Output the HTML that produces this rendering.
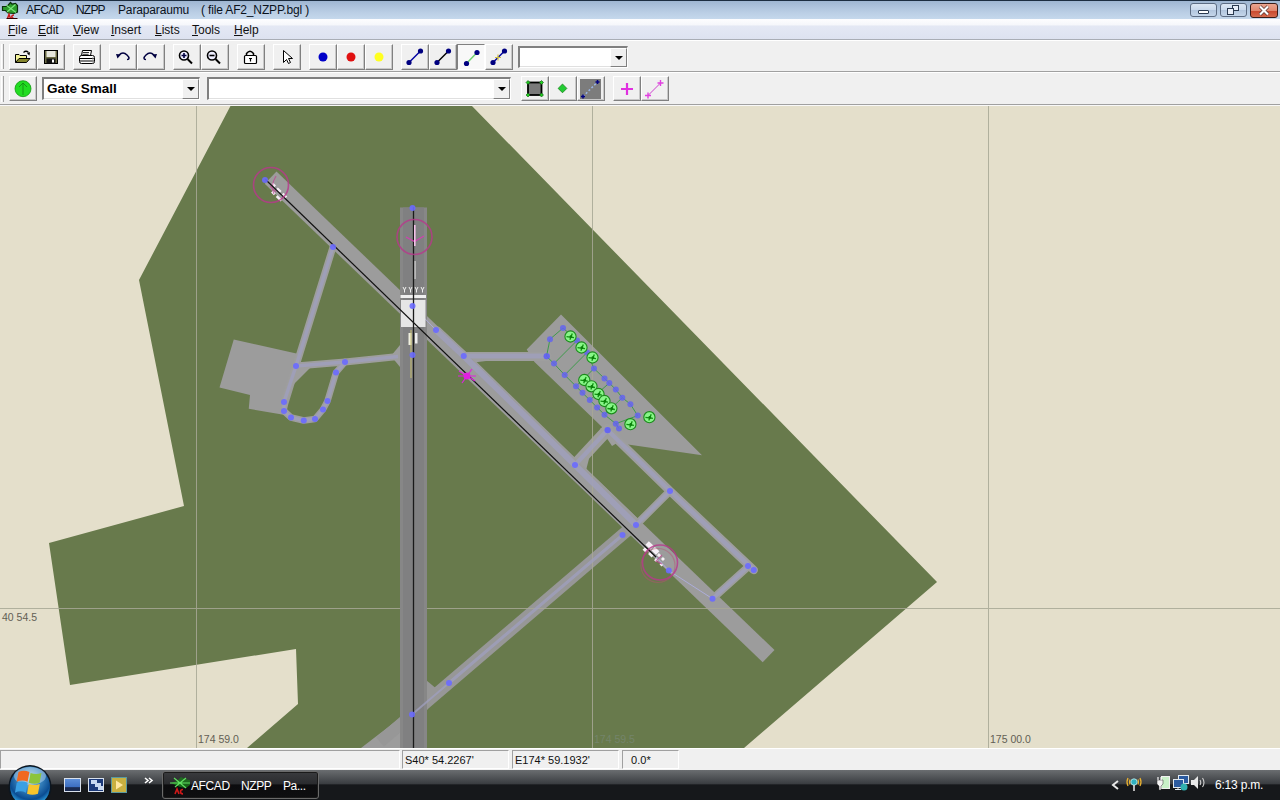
<!DOCTYPE html>
<html><head><meta charset="utf-8">
<style>
*{box-sizing:border-box;margin:0;padding:0}
html,body{width:1280px;height:800px;overflow:hidden;background:#f0f0f0;font-family:"Liberation Sans",sans-serif;}
.abs{position:absolute}
#title{left:0;top:0;width:1280px;height:19px;background:linear-gradient(#9fb6d2,#b9cde4 60%,#c5d8ec);border-top:1px solid #1c2d40}
#title .t{position:absolute;top:2px;font-size:12px;letter-spacing:-0.15px;color:#0a121c;white-space:pre}
#menu{left:0;top:19px;width:1280px;height:21px;background:linear-gradient(#fdfdff 0,#f6f7fb 28%,#e4e8f4 36%,#dde2f0 100%);border-bottom:1px solid #a9adb5}
#menu span{position:absolute;top:4px;font-size:12px;color:#111}
#tb1{left:0;top:40px;width:1280px;height:32px;background:#f0f0f0;border-top:1px solid #fff;border-bottom:1px solid #a0a0a0}
#tb2{left:0;top:72px;width:1280px;height:34px;background:#f0f0f0;border-top:1px solid #fff;border-bottom:1px solid #f8f8f8;box-shadow:inset 0 -1px 0 #a0a0a0}
.btn{position:absolute;width:28px;height:25px;background:#f0f0f0;border-top:1px solid #fff;border-left:1px solid #fff;border-right:1px solid #808080;border-bottom:1px solid #808080;box-shadow:inset -1px -1px 0 #c8c8c8}
.btn.p{border-top:1px solid #808080;border-left:1px solid #808080;border-right:1px solid #fff;border-bottom:1px solid #fff;background:#f8f8f8;box-shadow:none}
#tb1 .btn{height:26px}
.btn svg{position:absolute;left:-1px;top:-1px;width:27px;height:25px}
.grip{position:absolute;width:3px;border-left:1px solid #fff;border-right:1px solid #a0a0a0}
.combo{position:absolute;background:#fff;border-top:2px solid #808080;border-left:2px solid #808080;border-right:1px solid #fff;border-bottom:1px solid #fff;box-shadow:inset -1px -1px 0 #e0e0e0}
.dd{position:absolute;top:0;right:0;width:17px;height:100%;background:#f0f0f0;border-top:1px solid #fff;border-left:1px solid #fff;border-right:1px solid #808080;border-bottom:1px solid #808080}
.dd:after{content:"";position:absolute;left:4px;top:7px;border-left:4px solid transparent;border-right:4px solid transparent;border-top:4px solid #000}
#map{left:0;top:106px;width:1280px;height:642px;background:#e4dfcb;overflow:hidden}
#status{left:0;top:748px;width:1280px;height:22px;background:#f0f0f0;border-top:1px solid #fff}
.pan{position:absolute;top:1px;height:19px;border-top:1px solid #a0a0a0;border-left:1px solid #a0a0a0;border-right:1px solid #fff;border-bottom:1px solid #fff;font-size:11px;color:#111;padding:3px 0 0 2px;white-space:pre}
#task{left:0;top:770px;width:1280px;height:30px;background:linear-gradient(#6a6d70 0,#3b3e42 45%,#16181b 50%,#16181b 100%)}
</style></head><body>

<div id="title" class="abs">
  <svg style="position:absolute;left:0;top:0" width="20" height="19" viewBox="0 0 20 19">
    <path d="M2.5 5.5H7L10.5 1.5 12 3 15.5 2.5 17.5 4.5V11L14 12.5 8 12 5.5 9.5H2.5z" fill="#2c9c2c" stroke="#0c300c" stroke-width="1.2"/>
    <path d="M6 4l10 7.5M15.5 3.5L7 11" stroke="#7ce87c" stroke-width="1.1"/>
    <path d="M7.5 17.5l1.5-4 1.5 4M14 14q-2.2 0-2.2 1.8t2.2 1.8" fill="none" stroke="#c81818" stroke-width="1.5"/>
    <path d="M6.5 17.5h11" stroke="#300" stroke-width="1"/>
  </svg>
  <div class="t" style="left:26px;letter-spacing:-0.6px">AFCAD</div>
  <div class="t" style="left:76px;letter-spacing:-0.8px">NZPP</div>
  <div class="t" style="left:118px">Paraparaumu</div>
  <div class="t" style="left:201px">( file AF2_NZPP.bgl )</div>
  <div style="position:absolute;left:1190px;top:2px;width:27px;height:14px;border:1px solid #5d6d84;border-radius:3px;background:linear-gradient(#dce7f4 0,#c8d8ec 50%,#b2c6de 52%,#c4d6ea 100%)"></div>
  <div style="position:absolute;left:1198px;top:9px;width:11px;height:4px;border:1px solid #2a3a50;background:#fff;border-radius:1px"></div>
  <div style="position:absolute;left:1220px;top:2px;width:27px;height:14px;border:1px solid #5d6d84;border-radius:3px;background:linear-gradient(#dce7f4 0,#c8d8ec 50%,#b2c6de 52%,#c4d6ea 100%)"></div>
  <div style="position:absolute;left:1232px;top:4px;width:7px;height:6px;border:1.5px solid #2a3a50;background:#e8eef8"></div>
  <div style="position:absolute;left:1227px;top:7px;width:7px;height:7px;border:1.5px solid #2a3a50;background:#e8eef8"></div>
  <div style="position:absolute;left:1250px;top:2px;width:28px;height:15px;border:1px solid #3a1c18;border-radius:3px;background:linear-gradient(#eaa590 0,#e08870 50%,#c8482e 52%,#d66a4e 100%)"></div>
  <svg style="position:absolute;left:1257px;top:4px" width="14" height="11" viewBox="0 0 14 11"><path d="M3 1.5l8 8M11 1.5l-8 8" stroke="#4a2a2a" stroke-width="3.4"/><path d="M3 1.5l8 8M11 1.5l-8 8" stroke="#fff" stroke-width="2.2"/></svg>
</div>
<div id="menu" class="abs">
  <span style="left:8px"><u>F</u>ile</span>
  <span style="left:38px"><u>E</u>dit</span>
  <span style="left:73px"><u>V</u>iew</span>
  <span style="left:111px"><u>I</u>nsert</span>
  <span style="left:155px"><u>L</u>ists</span>
  <span style="left:192px"><u>T</u>ools</span>
  <span style="left:234px"><u>H</u>elp</span>
</div>
<div id="tb1" class="abs">
  <div class="grip" style="left:1px;top:3px;height:25px"></div>
  <div class="btn" style="left:9px;top:3px"><svg viewBox="0 0 27 25"><path d="M6.5 18.5V10.5H10l1 1h6.5v3" fill="#f2f29a" stroke="#000"/><path d="M6.5 18.5l3.5-4h11l-3.5 4z" fill="#84842c" stroke="#000"/><path d="M14.5 8.5q2.5-2.5 5 0" fill="none" stroke="#000" stroke-width="1.2"/><path d="M18 9.5l3-1.5-.5 3.5z" fill="#000"/></svg></div><div class="btn" style="left:37px;top:3px"><svg viewBox="0 0 27 25"><rect x="7.5" y="6.5" width="13" height="13" fill="#6a6a44" stroke="#000"/><rect x="9.5" y="7" width="9" height="6" fill="#e6e6dc"/><rect x="9.5" y="14.5" width="9" height="5" fill="#111"/><rect x="15" y="15.5" width="2" height="3" fill="#fff"/></svg></div><div class="btn" style="left:73px;top:3px"><svg viewBox="0 0 27 25"><path d="M9.5 6.5h9l-1 5h-9z" fill="#fff" stroke="#000"/><path d="M10 8.5h6M9.6 10.3h6" stroke="#000" stroke-width=".8"/><rect x="6.5" y="11.5" width="15" height="8" rx="2" fill="#fff" stroke="#000"/><path d="M7 14.5h14M7 17h14" stroke="#000" stroke-width="1.2"/><path d="M20 13v6" stroke="#999" stroke-width="1"/></svg></div><div class="btn" style="left:109px;top:3px"><svg viewBox="0 0 27 25"><path d="M10 11q4-4 8 0t0 4.5" fill="none" stroke="#000040" stroke-width="1.5"/><path d="M7 10l5 .5-3.5 4z" fill="#000040"/></svg></div><div class="btn" style="left:137px;top:3px"><svg viewBox="0 0 27 25"><path d="M17 11q-4-4-8 0t0 4.5" fill="none" stroke="#000040" stroke-width="1.5"/><path d="M20 10l-5 .5 3.5 4z" fill="#000040"/></svg></div><div class="btn" style="left:173px;top:3px"><svg viewBox="0 0 27 25"><circle cx="11" cy="11.5" r="4.5" fill="#eef" stroke="#000" stroke-width="1.6"/><path d="M8.5 11.5h5M11 9v5" stroke="#000040" stroke-width="1.6"/><path d="M14.5 15l4.5 4.5" stroke="#000" stroke-width="2"/></svg></div><div class="btn" style="left:201px;top:3px"><svg viewBox="0 0 27 25"><circle cx="11" cy="11.5" r="4.5" fill="#eef" stroke="#000" stroke-width="1.6"/><path d="M8.5 11.5h5" stroke="#000" stroke-width="1.6"/><path d="M14.5 15l4.5 4.5" stroke="#000" stroke-width="2"/></svg></div><div class="btn" style="left:237px;top:3px"><svg viewBox="0 0 27 25"><path d="M9.5 12V9.5q3.5-4.5 7 0V12" fill="none" stroke="#000" stroke-width="1.5"/><rect x="7.5" y="11.5" width="12" height="8" rx="1" fill="#fff" stroke="#000" stroke-width="1.2"/><path d="M12 14.5h3M13.5 14.5v3" stroke="#000" stroke-width="1.2"/></svg></div><div class="btn" style="left:273px;top:3px"><svg viewBox="0 0 27 25"><path d="M10.5 6.5v12l3-3 2 4 2-1-2-4h4z" fill="#fff" stroke="#000" stroke-width="1"/></svg></div><div class="btn" style="left:309px;top:3px"><svg viewBox="0 0 27 25"><circle cx="14" cy="13" r="4.5" fill="#0000c8"/></svg></div><div class="btn" style="left:337px;top:3px"><svg viewBox="0 0 27 25"><circle cx="14" cy="13" r="4.5" fill="#e01010"/></svg></div><div class="btn" style="left:365px;top:3px"><svg viewBox="0 0 27 25"><circle cx="14" cy="13" r="4.5" fill="#ffff20"/></svg></div><div class="btn" style="left:401px;top:3px"><svg viewBox="0 0 27 25"><path d="M8 18.5L19.5 7" stroke="#0000a0" stroke-width="1.5"/><circle cx="8" cy="18.5" r="2.6" fill="#000080"/><circle cx="19.5" cy="7" r="2.6" fill="#000080"/></svg></div><div class="btn" style="left:429px;top:3px"><svg viewBox="0 0 27 25"><path d="M8 18.5L19.5 7" stroke="#000" stroke-width="1.5"/><circle cx="8" cy="18.5" r="2.6" fill="#000080"/><circle cx="19.5" cy="7" r="2.6" fill="#000080"/></svg></div><div class="btn p" style="left:457px;top:3px"><svg viewBox="0 0 27 25"><path d="M9.5 19.5L20 8.5" stroke="#70d070" stroke-width="1.5"/><circle cx="9.5" cy="19.5" r="2.6" fill="#000080"/><circle cx="20" cy="8.5" r="2.6" fill="#000080"/></svg></div><div class="btn" style="left:485px;top:3px"><svg viewBox="0 0 27 25"><path d="M8 18.5L19.5 7" stroke="#0000a0" stroke-width="1.5"/><circle cx="8" cy="18.5" r="2.6" fill="#000080"/><circle cx="19.5" cy="7" r="2.6" fill="#000080"/><path d="M10 13.5h6M13 10.5v6" stroke="#d0c040" stroke-width="1.2"/></svg></div>
  <div class="combo" style="left:518px;top:5px;width:110px;height:22px"><div class="dd"></div></div>
</div>
<div id="tb2" class="abs">
  <div class="grip" style="left:1px;top:3px;height:26px"></div>
  <div class="btn" style="left:9px;top:3px"><svg viewBox="0 0 27 25"><circle cx="14" cy="12.7" r="8" fill="#22dd22" stroke="#119911" stroke-width=".8"/><path d="M14 19V7M10 11l4-4 4 4" fill="none" stroke="#118811" stroke-width=".8"/></svg></div>
  <div class="combo" style="left:42px;top:4px;width:158px;height:23px"><div class="dd"></div><span style="position:absolute;left:3px;top:2px;font-size:13.5px;font-weight:bold;color:#000">Gate Small</span></div>
  <div class="combo" style="left:207px;top:4px;width:304px;height:23px"><div class="dd"></div></div>
  <div class="btn" style="left:521px;top:3px"><svg viewBox="0 0 27 25"><rect x="7" y="6.5" width="13.5" height="12.5" fill="#7a7a7a" stroke="#000" stroke-width="1.8"/><g fill="#22cc22" stroke="#115511" stroke-width=".6"><path d="M7 4.5l2 2-2 2-2-2z"/><path d="M20.5 4.5l2 2-2 2-2-2z"/><path d="M7 17l2 2-2 2-2-2z"/><path d="M20.5 17l2 2-2 2-2-2z"/></g></svg></div>
  <div class="btn" style="left:549px;top:3px"><svg viewBox="0 0 27 25"><path d="M13.5 8l4.4 4.4-4.4 4.4-4.4-4.4z" fill="#22cc33" stroke="#117711" stroke-width=".7"/></svg></div>
  <div class="btn" style="left:577px;top:3px"><svg viewBox="0 0 27 25"><rect x="3" y="3" width="21" height="20" fill="#7c7c7c"/><path d="M6 20.5L20.5 6" stroke="#9ab8e8" stroke-width="1.5" stroke-dasharray="2 2"/><path d="M4 20.5h4M6 18.5v4M18.5 6h4M20.5 4v4" stroke="#000080" stroke-width="1.5"/></svg></div>
  <div class="btn" style="left:613px;top:3px"><svg viewBox="0 0 27 25"><path d="M8 13h12M14 7v12" stroke="#e030e0" stroke-width="2.2"/></svg></div>
  <div class="btn" style="left:641px;top:3px"><svg viewBox="0 0 27 25"><path d="M7 19.5L19.5 7" stroke="#d040d0" stroke-width="1"/><path d="M4 19.5h6M7 16.5v6M16.5 7h6M19.5 4v6" stroke="#e040e0" stroke-width="1.4"/></svg></div>
</div>

<div id="map" class="abs">
<svg width="1280" height="642" viewBox="0 106 1280 642" style="position:absolute;left:0;top:0">
  <polygon fill="#687a4c" points="231,105 471,105 937,582 744,748 247,748 298,704 296,649 70,685 49,543 184,506 139,280"/>
  <!-- aprons -->
  <polygon fill="#9c9c9c" points="233.75,339.5 297.5,353.75 300,366 285,415 248.75,408.75 250,395 219.5,387.5"/>
  <polygon fill="#9c9c9c" points="561,314.6 702,455.3 624.6,444 612,437 601,426 534.5,362 526.7,349.5"/>
  <!-- bottom-left pavement -->
  <polygon fill="#9c9c9c" points="400,718 400,748 361,748"/>
  <!-- taxiways -->
  <g fill="none" stroke="#9e9e9e" stroke-linejoin="round" stroke-linecap="round">
    <polyline stroke-width="7" points="333,247 296,366"/>
    <polyline stroke-width="7" points="296,366 345,362 412.5,355"/>
    <polyline stroke-width="6.5" points="296,366 284,402 284,411 291,417.5 303.75,420.5 315,419 323,409.5 327.5,401 336,372.5 345,362"/>
    <polyline stroke-width="9" points="463.6,356.5 547,356.5"/>
    <polyline stroke-width="12" points="436,332 463.75,358 575,466 636,525"/>
    <polyline stroke-width="12" points="575,465 607.5,430"/>
    <polyline stroke-width="8.5" points="607.5,430 670,491 753.75,570"/>
    <polyline stroke-width="7.5" points="749,566 712.5,598.75"/>
    <polyline stroke-width="7.5" points="636,525 670,491"/>
  </g>
  <polygon fill="#9e9e9e" points="461,350 486,361 470,363"/>
  <polygon fill="#9e9e9e" points="296,364 312,366 290,388"/>
  <polygon fill="#9e9e9e" points="566,462 590,455 584,478"/>
  <polygon fill="#9e9e9e" points="600,428 622,440 612,446"/>
  <polyline fill="none" stroke="#979797" stroke-width="12" points="628,530 412,714.6 380,742"/>
  <polygon fill="#979797" points="426,680 438,690 426,712"/>
  <polygon fill="#9e9e9e" points="400,345 391,356 400,367"/>
  <!-- diagonal runway -->
  <polygon fill="#9c9c9c" points="276.5,171.5 774.5,650 762.7,662.3 264.7,183.8"/>
  <!-- grid -->
  <g stroke="#a8a896" stroke-width="1" opacity="0.85">
    <line x1="196.5" y1="105" x2="196.5" y2="748"/>
    <line x1="592.5" y1="105" x2="592.5" y2="748"/>
    <line x1="988.5" y1="105" x2="988.5" y2="748"/>
    <line x1="0" y1="608.5" x2="1280" y2="608.5"/>
  </g>
  <!-- vertical runway -->
  <rect x="400" y="207.5" width="27" height="545" fill="#878787"/>
  <rect x="403" y="207.5" width="21" height="545" fill="#808081"/>
  <!-- taxi link lines -->
  <g fill="none" stroke="#a0a0c0" stroke-width="3.5" opacity="0.75" stroke-linejoin="round">
    <polyline points="333,247 296,366 345,362 398,356.5"/>
    <polyline points="296,366 284,402 284,411 291,417.5 303.75,420.5 315,419 323,409.5 327.5,401 336,372.5 345,362"/>
    <polyline stroke-width="5" points="463.6,356 547,356"/>
    <polyline stroke-width="6" points="436,330 463.75,356 575,465 636,525"/>
    <polyline stroke-width="4.5" points="575,465 607.5,430 670,491 753.75,570"/>
    <polyline stroke-width="4" points="749,566 712.5,598.75"/>
    <polyline stroke-width="4" points="636,525 670,491"/>
    <polyline stroke-width="3" points="622.5,535 449,683"/>
    <polyline stroke-width="2" points="449,683 412,714.6"/>
  </g>
  <g fill="none" stroke="#b0b0e8" stroke-width="1" opacity="0.8">
    <polyline points="412.5,306 436,330"/>
    <polyline points="656,557 668.8,570.6 712.5,598.75"/>
  </g>
  <!-- threshold markings vertical runway -->
  <rect x="401" y="300" width="24.5" height="27" fill="#e6e6e6"/>
  <rect x="400.5" y="295" width="25.5" height="3" fill="#f0f0f0"/>
  <g stroke="#f0f0f0" stroke-width="1" fill="none">
    <path d="M403 287l1.5 3 1.5-3M404.5 290v2.5M409 287l1.5 3 1.5-3M410.5 290v2.5M415 287l1.5 3 1.5-3M416.5 290v2.5M421 287l1.5 3 1.5-3M422.5 290v2.5"/>
    <path d="M415 261v18"/>
  </g>
  <rect x="408.5" y="333" width="3" height="12" fill="#f0f0e0"/>
  <rect x="415" y="333" width="2.5" height="10.5" fill="#f0f0f0"/>
  <path d="M411 330v48" stroke="#c8c070" stroke-width="1"/>
  <g fill="#f6f0f6">
    <g transform="translate(651 551) rotate(44) scale(1.4)"><rect x="-6" y="-4" width="5" height="3.5"/><rect x="0" y="-4" width="4.5" height="3.5"/><rect x="-5" y="1" width="3" height="2.5"/><rect x="0" y="1" width="3.5" height="2"/></g>
    <g transform="translate(661 561) rotate(44) scale(1.4)"><rect x="-5" y="-3" width="2.5" height="2"/><rect x="-1" y="-3" width="2" height="2"/><rect x="-4" y="1" width="2" height="2"/><rect x="1" y="1" width="2" height="1.5"/></g>
    <g transform="translate(277 192) rotate(44) scale(1.3)"><rect x="-7" y="-3" width="3" height="2"/><rect x="-2" y="-3" width="4" height="2.5"/><rect x="4" y="-3" width="4" height="2.5"/><rect x="-3" y="1.5" width="3" height="2"/><rect x="2" y="1.5" width="5" height="2"/></g>
  </g>
  <g fill="none" stroke="#c04090" stroke-width="1.1" opacity="0.7">
    <path d="M276 176q-6 10-2 18M270 186l6 6"/>
    <path d="M662 555l-6 6 6 3"/>
  </g>
  <circle cx="658" cy="565.5" r="17" fill="none" stroke="#b85070" stroke-width="1.2" opacity="0.45"/>
  <!-- runway center link lines -->
  <line x1="265" y1="179" x2="656" y2="557" stroke="#111" stroke-width="1.2"/>
  <line x1="413.5" y1="207" x2="413.5" y2="748" stroke="#1a1a1a" stroke-width="1.3"/>
  <!-- nodes -->
  <g fill="#6b6bff" opacity="0.9">
    <circle cx="265" cy="180" r="3"/><circle cx="333" cy="247" r="3"/><circle cx="296" cy="366" r="3"/><circle cx="345" cy="362" r="3"/>
    <circle cx="336" cy="372.5" r="3"/><circle cx="327.5" cy="401" r="3"/><circle cx="323" cy="409.5" r="3"/><circle cx="315" cy="419" r="3"/>
    <circle cx="303.75" cy="420.5" r="3"/><circle cx="291" cy="417.5" r="3"/><circle cx="284" cy="411" r="3"/><circle cx="284" cy="402" r="3"/>
    <circle cx="412.5" cy="208" r="3"/><circle cx="412.5" cy="306" r="3"/><circle cx="412.5" cy="355" r="3"/><circle cx="436" cy="330" r="3"/>
    <circle cx="463.75" cy="356" r="3"/><circle cx="547" cy="356.3" r="3"/><circle cx="575" cy="465" r="3"/><circle cx="607.5" cy="430" r="3"/>
    <circle cx="670" cy="491" r="3"/><circle cx="636" cy="525" r="3"/><circle cx="622.5" cy="535" r="3"/><circle cx="668.8" cy="570.6" r="3"/>
    <circle cx="753.75" cy="570" r="3"/><circle cx="748" cy="566" r="3"/><circle cx="712.5" cy="598.75" r="3"/><circle cx="449" cy="683" r="3"/><circle cx="412" cy="714.6" r="3"/>
  </g>
  <!-- parking -->
  <g fill="none" stroke="#2a9a3a" stroke-width="0.9" opacity="0.9">
    <polyline points="563,328 577,340.5 587,352.5 594,368.5 604.5,378.5 609.3,383 615.8,389.6 622.3,397.7 630.4,404.2 637.7,415.6"/>
    <polyline points="563,328 550,339.2 546.5,356.3 554,363.6 564.7,375 576,386.3 582.5,392.8 589.8,400.1 597.1,407.4 604.5,414.7 615.8,423.7 619,428.6"/>
    <line x1="554" y1="363.6" x2="577" y2="340.5"/>
    <line x1="564.7" y1="375" x2="587" y2="352.5"/>
    <line x1="576" y1="386.3" x2="594" y2="368.5"/>
    <line x1="589.8" y1="400.1" x2="609.3" y2="383"/>
    <line x1="604.5" y1="414.7" x2="622.3" y2="397.7"/>
    <line x1="615.8" y1="423.7" x2="637.7" y2="415.6"/>
  </g>
  <g fill="#6464f0" opacity="0.85">
    <circle cx="563" cy="328" r="3"/><circle cx="577" cy="340.5" r="3"/><circle cx="587" cy="352.5" r="3"/><circle cx="594" cy="368.5" r="3"/><circle cx="604.5" cy="378.5" r="3"/><circle cx="609.3" cy="383" r="3"/><circle cx="615.8" cy="389.6" r="3"/><circle cx="622.3" cy="397.7" r="3"/><circle cx="630.4" cy="404.2" r="3"/><circle cx="637.7" cy="415.6" r="3"/><circle cx="550" cy="339.2" r="3"/><circle cx="546.5" cy="356.3" r="3"/><circle cx="554" cy="363.6" r="3"/><circle cx="564.7" cy="375" r="3"/><circle cx="576" cy="386.3" r="3"/><circle cx="582.5" cy="392.8" r="3"/><circle cx="589.8" cy="400.1" r="3"/><circle cx="597.1" cy="407.4" r="3"/><circle cx="604.5" cy="414.7" r="3"/><circle cx="615.8" cy="423.7" r="3"/><circle cx="619" cy="428.6" r="3"/><circle cx="607.7" cy="430.2" r="3"/>
  </g>
  <g>
    <circle cx="570.5" cy="336.5" r="5.6" fill="#88f688" stroke="#1c8a1c" stroke-width="1.1"/><path d="M566.5,336.7L574.0,337.7M572.3,333.5L569.9,339.7" stroke="#109010" stroke-width="1.3"/><circle cx="570.9" cy="336.7" r="1.4" fill="#0a800a"/>
    <circle cx="581.5" cy="347.5" r="5.6" fill="#88f688" stroke="#1c8a1c" stroke-width="1.1"/><path d="M577.5,347.7L585.0,348.7M583.3,344.5L580.9,350.7" stroke="#109010" stroke-width="1.3"/><circle cx="581.9" cy="347.7" r="1.4" fill="#0a800a"/>
    <circle cx="592.5" cy="357.5" r="5.6" fill="#88f688" stroke="#1c8a1c" stroke-width="1.1"/><path d="M588.5,357.7L596.0,358.7M594.3,354.5L591.9,360.7" stroke="#109010" stroke-width="1.3"/><circle cx="592.9" cy="357.7" r="1.4" fill="#0a800a"/>
    <circle cx="584.3" cy="380" r="5.6" fill="#88f688" stroke="#1c8a1c" stroke-width="1.1"/><path d="M580.3,380.2L587.8,381.2M586.1,377.0L583.7,383.2" stroke="#109010" stroke-width="1.3"/><circle cx="584.7" cy="380.2" r="1.4" fill="#0a800a"/>
    <circle cx="591.5" cy="386.3" r="5.6" fill="#88f688" stroke="#1c8a1c" stroke-width="1.1"/><path d="M587.5,386.5L595.0,387.5M593.3,383.3L590.9,389.5" stroke="#109010" stroke-width="1.3"/><circle cx="591.9" cy="386.5" r="1.4" fill="#0a800a"/>
    <circle cx="598.5" cy="394" r="5.6" fill="#88f688" stroke="#1c8a1c" stroke-width="1.1"/><path d="M594.5,394.2L602.0,395.2M600.3,391.0L597.9,397.2" stroke="#109010" stroke-width="1.3"/><circle cx="598.9" cy="394.2" r="1.4" fill="#0a800a"/>
    <circle cx="604.5" cy="401" r="5.6" fill="#88f688" stroke="#1c8a1c" stroke-width="1.1"/><path d="M600.5,401.2L608.0,402.2M606.3,398.0L603.9,404.2" stroke="#109010" stroke-width="1.3"/><circle cx="604.9" cy="401.2" r="1.4" fill="#0a800a"/>
    <circle cx="611.4" cy="408.3" r="5.6" fill="#88f688" stroke="#1c8a1c" stroke-width="1.1"/><path d="M607.4,408.5L614.9,409.5M613.2,405.3L610.8,411.5" stroke="#109010" stroke-width="1.3"/><circle cx="611.8" cy="408.5" r="1.4" fill="#0a800a"/>
    <circle cx="630.4" cy="424.2" r="5.6" fill="#88f688" stroke="#1c8a1c" stroke-width="1.1"/><path d="M626.4,424.4L633.9,425.4M632.2,421.2L629.8,427.4" stroke="#109010" stroke-width="1.3"/><circle cx="630.8" cy="424.4" r="1.4" fill="#0a800a"/>
    <circle cx="649.4" cy="417.2" r="5.6" fill="#88f688" stroke="#1c8a1c" stroke-width="1.1"/><path d="M645.4,417.4L652.9,418.4M651.2,414.2L648.8,420.4" stroke="#109010" stroke-width="1.3"/><circle cx="649.8" cy="417.4" r="1.4" fill="#0a800a"/>
  </g>
  <!-- magenta circles -->
  <g fill="none" stroke="#b8388c" stroke-width="1.6" opacity="0.8">
    <circle cx="271" cy="185" r="17.5"/><circle cx="414.5" cy="237" r="17.5"/><circle cx="660" cy="562.5" r="17.5"/>
  </g>
  <g stroke="#d040b0" stroke-width="1.3" fill="none">
    <path d="M406 237l8.5 4.5 9.5-5.5"/>
    <path d="M414.8 225v21" stroke="#f4c0e8" stroke-width="1.6"/>
  </g>
  <g stroke="#e020e0" stroke-width="1.2">
    <circle cx="467" cy="376" r="3.5" fill="#e020e0" stroke="none"/>
    <path d="M459 371l16 10M462 383l10-14M458 376h18"/>
  </g>
</svg>
<div style="position:absolute;left:2px;top:505px;font-size:10.5px;color:#625e54">40 54.5</div>
<div style="position:absolute;left:198px;top:627px;font-size:10.5px;color:#625e54">174 59.0</div>
<div style="position:absolute;left:594px;top:627px;font-size:10.5px;color:#74846a">174 59.5</div>
<div style="position:absolute;left:990px;top:627px;font-size:10.5px;color:#625e54">175 00.0</div>
</div>

<div id="status" class="abs">
  <div class="pan" style="left:0;width:400px"></div>
  <div class="pan" style="left:402px;width:107px">S40* 54.2267'</div>
  <div class="pan" style="left:512px;width:107px">E174* 59.1932'</div>
  <div class="pan" style="left:622px;width:57px">  0.0*</div>
</div>
<div id="task" class="abs">
  <div style="position:absolute;left:64px;top:8px;width:17px;height:14px;border:1px solid #d8e0ec;background:linear-gradient(#5c8ed8,#3a6cc0 70%,#1a2a50 71%)"></div>
  <div style="position:absolute;left:88px;top:8px;width:16px;height:14px;border:1px solid #d8e0ec;background:#1c3a7a"></div>
  <div style="position:absolute;left:91px;top:10px;width:6px;height:4px;background:#c8d8f0"></div>
  <div style="position:absolute;left:95px;top:13px;width:6px;height:4px;background:#c8d8f0"></div>
  <div style="position:absolute;left:98px;top:16px;width:5px;height:4px;background:#c8d8f0"></div>
  <div style="position:absolute;left:111px;top:7px;width:16px;height:16px;border:1px solid #5a9aa0;background:#c8b040"></div>
  <svg style="position:absolute;left:111px;top:7px" width="16" height="16"><path d="M5 3.5l7 4.5-7 4.5z" fill="#ffe8a0"/></svg>
  <svg style="position:absolute;left:144px;top:7px" width="10" height="7"><path d="M1 1l3 2.5-3 2.5M5 1l3 2.5-3 2.5" fill="none" stroke="#fff" stroke-width="1.6"/></svg>
  <div style="position:absolute;left:162px;top:1px;width:157px;height:28px;border:1px solid #6a6a6a;border-radius:3px;background:linear-gradient(#3a3b3e 0,#2a2b2e 45%,#0c0c0e 50%,#0e0e10 100%);box-shadow:inset 0 0 0 1px #1a1a1a"></div>
  <svg style="position:absolute;left:169px;top:6px" width="22" height="20" viewBox="0 0 22 20"><path d="M2 7l6-2 4-4 4 2 5 1v5l-4 3-6-1z" fill="#1a7a1a" opacity=".8"/><path d="M5 2l12 10M17 2L6 11M1 7h20" stroke="#60e060" stroke-width="1.2"/><path d="M6 18l2-5 2 5M14 13.5q-2.5 0-2.5 2.2t2.5 2.2" fill="none" stroke="#d01818" stroke-width="1.6"/></svg>
  <div style="position:absolute;left:191px;top:9px;font-size:12px;letter-spacing:-0.4px;color:#fff;white-space:pre">AFCAD</div>
  <div style="position:absolute;left:241px;top:9px;font-size:12px;letter-spacing:-0.4px;color:#fff;white-space:pre">NZPP</div>
  <div style="position:absolute;left:283px;top:9px;font-size:12px;letter-spacing:-0.4px;color:#fff;white-space:pre">Pa...</div>
  <svg style="position:absolute;left:1110px;top:10px" width="12" height="10"><path d="M8 1L3 5l5 4" fill="none" stroke="#e8e8e8" stroke-width="2"/></svg>
  <svg style="position:absolute;left:1125px;top:5px" width="18" height="16"><path d="M3 3q-2 4 0 8M5 4.5q-1 2.5 0 5M15 3q2 4 0 8M13 4.5q1 2.5 0 5" fill="none" stroke="#e8b030" stroke-width="1.3"/><circle cx="9" cy="7" r="3.2" fill="#30b0c0" stroke="#c8f0f0" stroke-width=".8"/><path d="M9 10v6" stroke="#e0e0e0" stroke-width="1.6"/></svg>
  <svg style="position:absolute;left:1155px;top:4px" width="16" height="17"><rect x="6.5" y="2.5" width="8" height="12" fill="#c8f0c8" stroke="#f0f0f0"/><path d="M2 6h6v4l-2 2v4h-2v-4l-2-2z" fill="#f4f4f4" stroke="#333" stroke-width=".5"/><path d="M3 3v3M6 3v3" stroke="#f4f4f4" stroke-width="1.2"/></svg>
  <svg style="position:absolute;left:1173px;top:4px" width="16" height="17"><rect x="5.5" y="1.5" width="10" height="8" fill="#2a5aa0" stroke="#e0e8f0"/><rect x="0.5" y="5.5" width="10" height="8" fill="#2a5aa0" stroke="#e0e8f0"/><path d="M5 13.5v2M2 15.5h6" stroke="#e0e8f0"/><circle cx="11" cy="13" r="3.5" fill="#30b0b0"/></svg>
  <svg style="position:absolute;left:1190px;top:5px" width="16" height="15"><path d="M1 5h3l4-4v13l-4-4h-3z" fill="#e8e8e8"/><path d="M10 5q1.5 2.5 0 5M12.5 3q3 4.5 0 9" fill="none" stroke="#d0d0d0" stroke-width="1.1"/></svg>
  <div style="position:absolute;left:1215px;top:8px;font-size:12px;letter-spacing:-0.2px;color:#fff;white-space:pre">6:13 p.m.</div>
</div>
<svg style="position:absolute;left:8px;top:764px" width="44" height="36" viewBox="0 0 44 36">
  <defs>
    <radialGradient id="orb" cx="50%" cy="30%" r="70%"><stop offset="0" stop-color="#a8cce4"/><stop offset=".4" stop-color="#3a86c0"/><stop offset=".75" stop-color="#0a4c92"/><stop offset="1" stop-color="#38b8f4"/></radialGradient>
  </defs>
  <circle cx="22" cy="22.5" r="21.5" fill="#0c1620"/>
  <circle cx="22" cy="22.5" r="20" fill="url(#orb)"/>
  <ellipse cx="22" cy="12" rx="16" ry="9" fill="#e0f0fa" opacity=".4"/>
  <g transform="translate(22 20) scale(1.15) translate(-22 -20)">
  <path d="M12 9.5q4.5-2.2 9.5 0l-1.6 8.5q-4.5-2.2-9.5 0z" fill="#f06820"/>
  <path d="M22.5 10.5q4.8 1.6 9.5 0l-1.6 8.5q-4.8 1.6-9.5 0z" fill="#8cc43c"/>
  <path d="M10.5 19q4.5-2.2 9.5 0l-1.6 8.5q-4.5-2.2-9.5 0z" fill="#3aa0e4"/>
  <path d="M21 20q4.8 1.6 9.5 0l-1.6 8.5q-4.8 1.6-9.5 0z" fill="#f8c42c"/>
  </g>
</svg>

</body></html>
